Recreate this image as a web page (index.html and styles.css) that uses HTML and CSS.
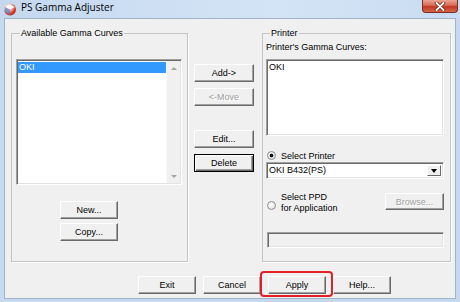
FILE: index.html
```html
<!DOCTYPE html>
<html lang="en">
<head>
    <meta charset="UTF-8">
    <title>PS Gamma Adjuster</title>
    <link rel="stylesheet" href="styles.css">
</head>
<body>
    <div class="window">
        <div class="titlebar">
            <svg class="app-icon" width="14" height="14" viewBox="0 0 14 14">
                <defs>
                    <radialGradient id="ball" cx="0.35" cy="0.3" r="0.8">
                        <stop offset="0" stop-color="#ffffff"/>
                        <stop offset="0.35" stop-color="#f6c9b8"/>
                        <stop offset="0.7" stop-color="#e0402a"/>
                        <stop offset="1" stop-color="#a81c12"/>
                    </radialGradient>
                </defs>
                <circle cx="7" cy="7.5" r="6" fill="url(#ball)"/>
                <path d="M2 5 L7 2.5 L12 5 L7 7.5 Z" fill="#fff" opacity="0.85"/>
                <path d="M2 5 L7 7.5 L7 13 L2 10 Z" fill="#4f86d8" opacity="0.7"/>
            </svg>
            <span class="title">PS Gamma Adjuster</span>
            <div class="close-btn">
                <svg width="12" height="9" viewBox="0 0 12 9">
                    <path d="M2.5 1 L9.5 8 M9.5 1 L2.5 8" stroke="#6a1e14" stroke-width="3.4" stroke-linecap="round"/>
                    <path d="M2.5 1 L9.5 8 M9.5 1 L2.5 8" stroke="#fff" stroke-width="1.8" stroke-linecap="round"/>
                </svg>
            </div>
        </div>

        <div class="client">
            <div class="panes">
                <fieldset class="group group-curves">
                    <legend>Available Gamma Curves</legend>
                    <div class="listbox listbox-curves sunken">
                        <div class="list-items">
                            <div class="list-item selected">OKI</div>
                        </div>
                        <div class="scrollbar">
                            <span class="arrow arrow-up"></span>
                            <span class="arrow arrow-down"></span>
                        </div>
                    </div>
                    <div class="curve-buttons">
                        <button class="btn">New...</button>
                        <button class="btn">Copy...</button>
                    </div>
                </fieldset>

                <div class="actions">
                    <button class="btn">Add-&gt;</button>
                    <button class="btn" disabled>&lt;-Move</button>
                    <button class="btn spaced">Edit...</button>
                    <button class="btn default">Delete</button>
                </div>

                <fieldset class="group group-printer">
                    <legend>Printer</legend>
                    <div class="field-label">Printer's Gamma Curves:</div>
                    <div class="listbox listbox-printer sunken">
                        <div class="list-items">
                            <div class="list-item">OKI</div>
                        </div>
                    </div>

                    <div class="radio-row">
                        <span class="radio checked"></span>
                        <span>Select Printer</span>
                    </div>
                    <div class="combo sunken">
                        <span class="combo-value">OKI B432(PS)</span>
                        <span class="combo-btn"><span class="arrow arrow-down dark"></span></span>
                    </div>

                    <div class="ppd-row">
                        <span class="radio"></span>
                        <span class="ppd-label">Select PPD<br>for Application</span>
                        <button class="btn browse" disabled>Browse...</button>
                    </div>
                    <div class="path-box sunken"></div>
                </fieldset>
            </div>

            <div class="footer">
                <button class="btn">Exit</button>
                <button class="btn">Cancel</button>
                <button class="btn marked">Apply</button>
                <button class="btn">Help...</button>
            </div>
        </div>
    </div>
</body>
</html>
```

FILE: styles.css
```css
body {
    margin: 0;
    font-family: "Liberation Sans", Arial, sans-serif;
    font-size: 9px;
    color: #000;
}

.window {
    width: 460px;
    height: 302px;
    box-sizing: border-box;
    display: flex;
    flex-direction: column;
    padding: 0 4px 3px;
    background: #c6d9ef;
}

/* title bar */
.titlebar {
    height: 18px;
    margin: 0 -4px;
    padding: 0 2px 0 3px;
    display: flex;
    align-items: flex-start;
    background: linear-gradient(to right, #c4d8ef, #d4e4f6 60%, #c9dcf1);
}

.app-icon {
    margin-top: 2px;
}

.title {
    margin-left: 4px;
    font-family: "Open Sans", sans-serif;
    font-size: 10px;
    line-height: 15px;
    color: #000;
}

.close-btn {
    margin-left: auto;
    width: 36px;
    height: 13px;
    box-sizing: border-box;
    display: flex;
    align-items: center;
    justify-content: center;
    border: 1px solid #7b2c20;
    border-top: none;
    border-radius: 0 0 4px 4px;
    background: linear-gradient(#eaa594, #d66a55 45%, #c2391f 55%, #d8664c);
}

/* client area */
.client {
    flex: 1;
    display: flex;
    flex-direction: column;
    border: 1px solid #9fb3cb;
    background: #f0f0f0;
}

.panes {
    display: flex;
    align-items: flex-start;
    margin-top: 8px;
    padding-left: 6px;
}

.group {
    box-sizing: border-box;
    height: 235px;
    min-width: 0;
    margin: 0;
    padding: 0;
    border: 1px solid #c4c4c4;
    box-shadow: 1px 1px 0 #fff;
}

.group legend {
    padding: 0 1px;
    margin-left: 4px;
    line-height: 13px;
}

.group-curves {
    width: 177px;
    padding: 0 4px;
}

.group-printer {
    width: 189px;
    margin-left: 8px;
    padding: 0 6px 0 3px;
}

/* 3d borders */
.sunken {
    box-sizing: border-box;
    border: 1px solid;
    border-color: #a0a0a0 #fff #fff #a0a0a0;
    box-shadow: inset 1px 1px 0 #696969, inset -1px -1px 0 #e3e3e3;
}

.btn {
    box-sizing: border-box;
    width: 58px;
    height: 18px;
    padding: 0;
    font: inherit;
    color: #000;
    background: #f0f0f0;
    border: 1px solid;
    border-color: #fff #696969 #696969 #fff;
    box-shadow: inset -1px -1px 0 #a0a0a0;
}

.btn:disabled {
    color: #a0a0a0;
    text-shadow: 1px 1px 0 #fff;
}

.btn.default {
    border-color: #000;
    box-shadow: inset 1px 1px 0 #fff, inset -1px -1px 0 #696969, inset -2px -2px 0 #a0a0a0;
}

/* list boxes */
.listbox {
    display: flex;
    background: #fff;
}

.listbox-curves {
    width: 166px;
    height: 126px;
    margin-top: 19px;
}

.listbox-printer {
    width: 178px;
    height: 77px;
    margin-top: 5px;
}

.list-items {
    flex: 1;
    padding: 2px 0 0 1px;
}

.list-item {
    height: 11px;
    line-height: 11px;
    padding-left: 1px;
}

.list-item.selected {
    background: #3399ff;
    color: #fff;
}

.scrollbar {
    width: 13px;
    margin: 1px 1px 1px 0;
    display: flex;
    flex-direction: column;
    align-items: center;
    justify-content: space-between;
    padding: 6px 0 5px;
    background: #f0f0f0;
    border-left: 1px solid #fafafa;
}

.arrow {
    width: 0;
    height: 0;
    border-left: 3px solid transparent;
    border-right: 3px solid transparent;
}

.arrow-up {
    border-bottom: 3px solid #a3a3a3;
}

.arrow-down {
    border-top: 3px solid #a3a3a3;
}

.arrow-down.dark {
    border-left-width: 3.5px;
    border-right-width: 3.5px;
    border-top: 4px solid #000;
}

.curve-buttons {
    display: flex;
    flex-direction: column;
    gap: 4px;
    margin: 16px 0 0 44px;
}

/* middle column */
.actions {
    display: flex;
    flex-direction: column;
    gap: 6px;
    width: 60px;
    margin-left: 6px;
    padding-top: 37px;
}

.actions .btn {
    width: 60px;
}

.actions .spaced {
    margin-top: 18px;
}

/* printer group */
.field-label {
    margin-top: 1px;
    line-height: 13px;
}

.radio-row {
    display: flex;
    align-items: center;
    gap: 5px;
    height: 13px;
    margin: 13px 0 0 1px;
}

.radio {
    flex: none;
    box-sizing: border-box;
    width: 9px;
    height: 9px;
    border-radius: 50%;
    border: 1px solid #8c8c8c;
    background: radial-gradient(circle at 40% 40%, #fff, #dcdcdc);
}

.radio.checked {
    background: radial-gradient(circle, #111 0 1.6px, transparent 2.2px), radial-gradient(circle at 40% 40%, #fff, #dcdcdc);
}

.combo {
    display: flex;
    width: 178px;
    height: 17px;
    background: #fff;
}

.combo-value {
    flex: 1;
    padding-left: 2px;
    line-height: 15px;
}

.combo-btn {
    box-sizing: border-box;
    width: 14px;
    margin: 2px 2px 2px 0;
    display: flex;
    align-items: center;
    justify-content: center;
    background: #f0f0f0;
    border: 1px solid;
    border-color: #fff #696969 #696969 #fff;
}

.ppd-row {
    display: flex;
    align-items: flex-start;
    margin: 13px 0 0 1px;
}

.ppd-row .radio {
    margin-top: 9px;
}

.ppd-label {
    margin-left: 5px;
    line-height: 11px;
}

.btn.browse {
    width: 59px;
    height: 17px;
    margin: 1px 0 0 auto;
}

.path-box {
    width: 177px;
    height: 16px;
    margin: 18px 0 0 1px;
    background: #f0f0f0;
}

/* bottom buttons */
.footer {
    display: flex;
    gap: 7px;
    margin-top: 14px;
    padding-left: 133px;
}

.marked {
    position: relative;
}

.marked::after {
    content: "";
    position: absolute;
    top: -6px;
    right: -8px;
    bottom: -4px;
    left: -9px;
    border: 2px solid #e3202a;
    border-radius: 4px;
}
```
